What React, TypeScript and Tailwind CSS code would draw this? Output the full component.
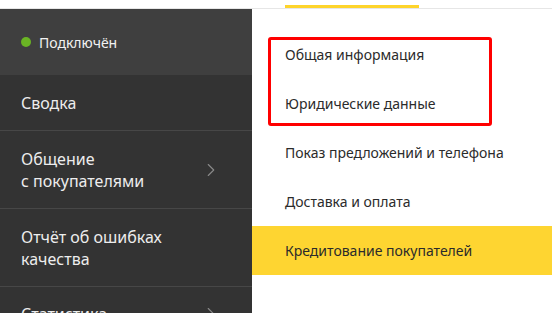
import { ChevronRight } from 'lucide-react';

interface NavItem {
  lines: string[];
  arrow?: boolean;
  height: string;
}

const navItems: NavItem[] = [
  { lines: ['Сводка'], height: 'h-[55px]' },
  { lines: ['Общение', 'с покупателями'], arrow: true, height: 'h-[78px]' },
  { lines: ['Отчёт об ошибках', 'качества'], height: 'h-[78px]' },
  { lines: ['Статистика'], arrow: true, height: 'h-[55px]' },
];

const subItems = [
  'Общая информация',
  'Юридические данные',
  'Показ предложений и телефона',
  'Доставка и оплата',
  'Кредитование покупателей',
];

function Sidebar() {
  return (
    <aside className="w-[252px] shrink-0 bg-[#333333]">
      <div className="h-[66px] bg-[#3f3f3f] flex items-center pl-[21px] gap-2">
        <span className="w-[10px] h-[10px] rounded-full bg-[#6ab424]" />
        <span className="text-[14px] text-[#f2f2f2]">Подключён</span>
      </div>
      {navItems.map((item, i) => (
        <div
          key={i}
          className={`${item.height} flex items-center justify-between pl-[21px] pr-[30px] ${
            i > 0 ? 'border-t border-[#474747]' : ''
          }`}
        >
          <div className="text-[16px] leading-[22px] text-[#ededed]">
            {item.lines.map((l) => (
              <div key={l}>{l}</div>
            ))}
          </div>
          {item.arrow && <ChevronRight className="w-[22px] h-[22px] text-[#8a8a8a]" strokeWidth={1.2} />}
        </div>
      ))}
    </aside>
  );
}

export default function App() {
  return (
    <div
      className="w-[552px] h-[313px] overflow-hidden bg-white"
      style={{ fontFamily: '"Noto Sans", sans-serif' }}
    >
      <div className="h-[9px] border-b border-[#e6e6e6] relative">
        <div className="absolute left-[285px] top-[5px] w-[134px] h-[3px] bg-[#fed42b]" />
      </div>
      <div className="flex">
        <Sidebar />
        <main className="flex-1 relative pt-[21px]">
          {subItems.map((s, i) => (
            <div
              key={s}
              className={`h-[49px] flex items-center pl-[33px] text-[14px] text-[#2b2b2b] ${
                i === 4 ? 'bg-[#fed531]' : ''
              }`}
            >
              {s}
            </div>
          ))}
          <div className="absolute left-[16px] top-[28px] w-[224px] h-[89px] border-[3px] border-[#ff0000] rounded-[3px]" />
        </main>
      </div>
    </div>
  );
}
